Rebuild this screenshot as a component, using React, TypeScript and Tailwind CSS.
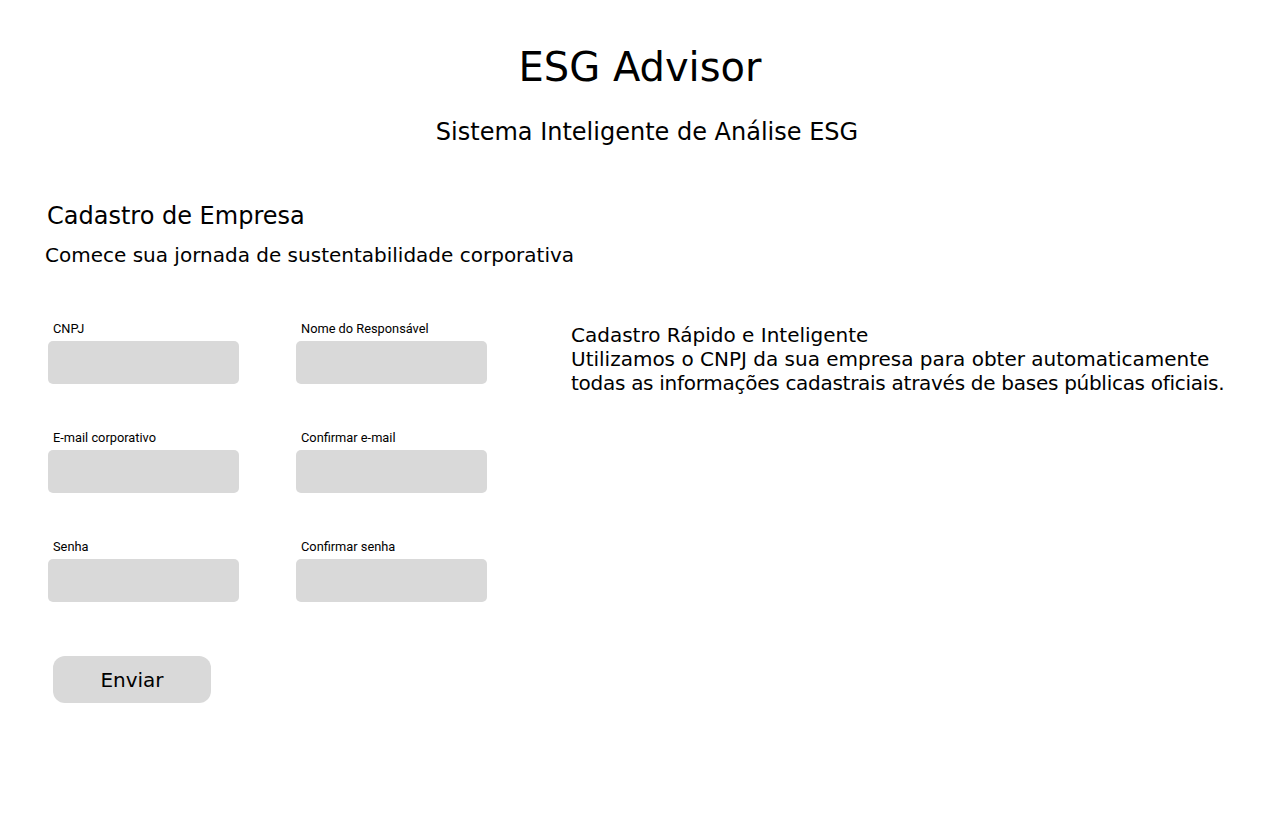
const fields = [
  'CNPJ',
  'Nome do Responsável',
  'E-mail corporativo',
  'Confirmar e-mail',
  'Senha',
  'Confirmar senha',
]

const Field = ({ label }: { label: string }) => (
  <div className="flex flex-col">
    <label className="pl-[5px] text-[12.8px] leading-4 text-black font-['Roboto',sans-serif]">
      {label}
    </label>
    <input
      type="text"
      className="mt-1 h-[43px] w-[191px] rounded-[5px] bg-[#d9d9d9] outline-none"
    />
  </div>
)

export default function App() {
  return (
    <div className="min-h-[832px] w-full bg-white text-black font-['DejaVu_Sans',sans-serif]">
      {/* Header */}
      <header className="pt-[43px] text-center">
        <h1 className="text-[40px] leading-[48px] font-normal">ESG Advisor</h1>
        <p className="mt-[25px] pl-[14px] text-[24px] leading-8">Sistema Inteligente de Análise ESG</p>
      </header>

      <main className="px-[45px] pt-[52px]">
        <h2 className="pl-[2px] text-[24px] leading-8">Cadastro de Empresa</h2>
        <p className="mt-[11px] text-[20px] leading-6">Comece sua jornada de sustentabilidade corporativa</p>

        <div className="mt-[54px] flex items-start">
          {/* Form */}
          <div className="pl-[3px]">
            <div className="grid grid-cols-[191px_191px] gap-x-[57px] gap-y-[46px]">
              {fields.map((f) => (
                <Field key={f} label={f} />
              ))}
            </div>
            <button className="mt-[54px] ml-[5px] h-[47px] w-[158px] rounded-[12px] bg-[#d9d9d9] text-[20px] text-black">
              Enviar
            </button>
          </div>

          {/* Info */}
          <div className="ml-[84px] pt-[2px] whitespace-nowrap text-[20px] leading-6">
            <p>Cadastro Rápido e Inteligente</p>
            <p>
              Utilizamos o CNPJ da sua empresa para obter automaticamente
              <br />
              <span className="tracking-[-0.28px]">
                todas as informações cadastrais através de bases públicas oficiais.
              </span>
            </p>
          </div>
        </div>
      </main>
    </div>
  )
}
